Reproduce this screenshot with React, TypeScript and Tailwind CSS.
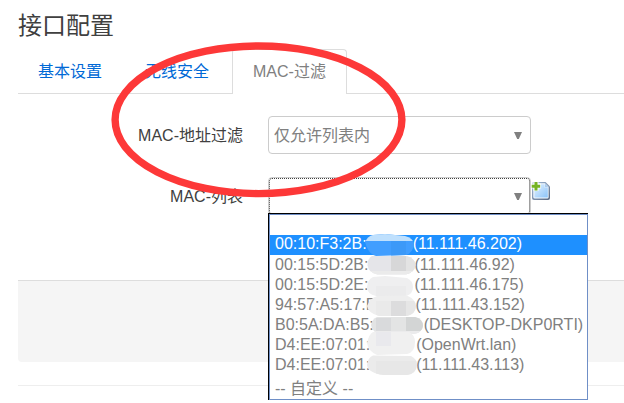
import React from 'react';

type Tab = {
  id: string;
  label: string;
  active?: boolean;
};

type Client = {
  mac: string;
  host: string;
  gap: string;
};

const tabs: Tab[] = [
  { id: 'general', label: '基本设置' },
  { id: 'security', label: '无线安全' },
  { id: 'macfilter', label: 'MAC-过滤', active: true },
];

const clients: Client[] = [
  { mac: '00:10:F3:2B:', host: '(11.111.46.202)', gap: 'w-[46px]' },
  { mac: '00:15:5D:2B:', host: '(11.111.46.92)', gap: 'w-[46px]' },
  { mac: '00:15:5D:2E:', host: '(11.111.46.175)', gap: 'w-[46px]' },
  { mac: '94:57:A5:17:F', host: '(11.111.43.152)', gap: 'w-[40px]' },
  { mac: 'B0:5A:DA:B5:', host: '(DESKTOP-DKP0RTI)', gap: 'w-[50px]' },
  { mac: 'D4:EE:07:01:', host: '(OpenWrt.lan)', gap: 'w-[46px]' },
  { mac: 'D4:EE:07:01:', host: '(11.111.43.113)', gap: 'w-[46px]' },
];

const AddIcon = () => (
  <svg width="20" height="20" viewBox="0 0 20 20" aria-hidden="true">
    <defs>
      <linearGradient id="page" x1="0" y1="0" x2="1" y2="1">
        <stop offset="0" stopColor="#e4f2ff" />
        <stop offset="1" stopColor="#8cc4fa" />
      </linearGradient>
      <linearGradient id="edge" x1="0" y1="0" x2="1" y2="1">
        <stop offset="0" stopColor="#a3bddc" />
        <stop offset="1" stopColor="#5b6982" />
      </linearGradient>
    </defs>
    <path d="M3 1h11.500l4.500 4.500V17a2 2 0 0 1-2 2H3a2 2 0 0 1-2-2V3a2 2 0 0 1 2-2z" fill="url(#edge)" />
    <path d="M3 2.200h11l3.600 3.600V16.400l-1 1H3.500l-1.200-1V3z" fill="#f4faff" />
    <path d="M4 3.200h9.600v3.200h3.200v10H3.400V4z" fill="url(#page)" />
    <path d="M14 2.600v3.600h3.600z" fill="#a9cbee" />
    <path d="M2.500 0h5v2.500H10v5H7.500V10h-5V7.500H0v-5h2.500z" fill="#fff" fillOpacity=".85" />
    <path d="M3.500 1h3v2.800h2.700v3H6.500v2.600h-3V6.800H.700v-3h2.800z" fill="#74b324" />
  </svg>
);

// blurred-out part of every address
const Smudges = () => (
  <svg
    className="pointer-events-none absolute left-0 top-0"
    width="320"
    height="187"
    viewBox="268 213 320 187"
    aria-hidden="true"
  >
    <defs>
      <clipPath id="s1"><path d="M364 241q3-6 8-7l12-1 20 2q8 2 9 8-1 9-8 11l-30 1q-8-2-11-14z" /></clipPath>
      <clipPath id="s2"><path d="M371 255h34q9 2 9.500 9-1 8-10 9.500h-28q-9-2-10-9 0-7 4.500-9.500z" /></clipPath>
      <clipPath id="s3"><path d="M372 276l12-1 22 2q6 3 6 9 0 7-7 9h-30q-9-2-9-9 1-8 6-10z" /></clipPath>
      <clipPath id="s4"><path d="M376 295l30-.5q9 4 9 11-1 8-9 9.500h-28q-11-3-12-10 3-8 10-10z" /></clipPath>
      <clipPath id="s5"><path d="M376 316h38q8 2 8 9-1 7-10 8h-33q-8-2-9-9 1-6 6-8z" /></clipPath>
      <clipPath id="s6"><path d="M372 331h36q6 3 6 10 0 10-8 12l-30 1q-9-4-10-12 2-9 6-11z" /></clipPath>
      <clipPath id="s7"><path d="M372 354.500l38 .5q6 3 6 9-1 9-10 10h-23q-16-2-17-10 1-8 6-9.500z" /></clipPath>
    </defs>
    <g clipPath="url(#s1)">
      <path d="M362 230h55v30h-55z" fill="#419eff" />
      <path d="M362 230h55v10h-55z" fill="#bfe0fd" />
      <path d="M390 240h15v15h-15z" fill="#3c99f8" />
    </g>
    <g clipPath="url(#s2)">
      <path d="M362 250h55v26h-55z" fill="#e5e5e9" />
      <path d="M390 255h15v15h-15z" fill="#d7d7d8" />
      <path d="M405 250h12v26h-12z" fill="#e3e3e3" />
      <path d="M362 270h55v6h-55z" fill="#ebebeb" />
    </g>
    <g clipPath="url(#s3)">
      <path d="M362 272h55v26h-55z" fill="#efeff0" />
      <path d="M375 285h30v13h-30z" fill="#ebebec" />
    </g>
    <g clipPath="url(#s4)">
      <path d="M362 290h55v28h-55z" fill="#eee" />
      <path d="M375 300h15v18h-15z" fill="#eaeaea" />
      <path d="M390 300h15v15h-15z" fill="#dcdcdd" />
      <path d="M405 300h12v15h-12z" fill="#e6e6e6" />
    </g>
    <g clipPath="url(#s5)">
      <path d="M366 312h58v24h-58z" fill="#e3e4e4" />
      <path d="M375 317h15v13h-15z" fill="#d9dadc" />
      <path d="M405 312h18v18h-18z" fill="#d3d5d5" />
      <path d="M366 330h58v6h-58z" fill="#ebebec" />
    </g>
    <g clipPath="url(#s6)">
      <path d="M362 330h55v26h-55z" fill="#f0f0f0" />
      <path d="M375 330h15v15h-15z" fill="#e9e9ed" />
    </g>
    <g clipPath="url(#s7)">
      <path d="M362 352h58v26h-58z" fill="#ebebeb" />
      <path d="M375 360h43v16h-43z" fill="#e7e7e7" />
    </g>
  </svg>
);

const Arrow = () => (
  <svg className="pointer-events-none absolute right-[9px] top-4" width="8" height="7" viewBox="0 0 8 7" aria-hidden="true">
    <path d="M0 0h8L4.800 7H3.200z" fill="#808080" />
  </svg>
);

const App = () => {
  return (
    <main
      className={
        "relative overflow-hidden bg-white pb-4 pl-[18px] pt-2 text-base text-[#404040] font-['Liberation_Sans','Noto_Sans_CJK_SC',sans-serif]"
      }
    >
      <h1 className="text-2xl leading-9">接口配置</h1>

      <nav className="mt-[5px] flex gap-[3px] border-b border-[#ddd]">
        {tabs.map((tab) => (
          <a
            key={tab.id}
            href={`#${tab.id}`}
            className={
              tab.active
                ? '-mb-px h-[45px] rounded-t border border-b-0 border-[#ddd] bg-white px-5 leading-[44px] text-[#808080]'
                : 'h-11 border border-transparent px-[19px] leading-[44px] text-[#0069d6]'
            }
          >
            {tab.label}
          </a>
        ))}
      </nav>

      <form className="mt-[22px] flex flex-col gap-[23px]">
        <div className="flex items-center gap-[25px]">
          <label htmlFor="policy" className="w-[225px] pt-px text-right">MAC-地址过滤</label>
          <div className="relative">
            <select
              id="policy"
              className="block h-[38px] w-[263px] appearance-none rounded border border-[#ccc] bg-white px-[5px] pt-px text-[#808080]"
            >
              <option>仅允许列表内</option>
            </select>
            <Arrow />
          </div>
        </div>

        <div className="flex items-center gap-[25px]">
          <label htmlFor="maclist" className="w-[225px] pt-px text-right">MAC-列表</label>
          <div className="relative flex items-start">
            <div className="relative">
              <select
                id="maclist"
                className="block h-[38px] w-[263px] appearance-none rounded border border-[#ccc] bg-white px-[5px] text-[#808080] outline-1 -outline-offset-2 outline-dotted outline-[#404040]"
              >
                <option></option>
              </select>
              <Arrow />
            </div>
            <button type="button" aria-label="添加" className="pt-1">
              <AddIcon />
            </button>

            {/* opened list */}
            <div className="absolute left-0 top-9 z-10 w-80 border-l border-t border-black">
              <ul role="listbox" className="border border-[#6f8fc7] bg-white leading-5 text-[#808080]">
                <li role="option" aria-selected="false" className="h-5"></li>
                {clients.map((client, index) => (
                  <li
                    key={index}
                    role="option"
                    aria-selected={index === 0}
                    className={
                      index === 0
                        ? 'flex h-5 whitespace-nowrap bg-[#1e90ff] pl-[5px] leading-[18px] text-white'
                        : 'flex h-5 whitespace-nowrap pl-[5px] leading-5'
                    }
                  >
                    <span>{client.mac}</span>
                    <span className={client.gap}></span>
                    <span>{client.host}</span>
                  </li>
                ))}
                <li role="option" aria-selected="false" className="h-6 px-[5px] leading-7">
                  -- 自定义 --
                </li>
              </ul>
              <Smudges />
            </div>
          </div>
        </div>
      </form>

      <div className="mt-[65px] h-[82px] rounded-bl border-t border-[#ddd] bg-[#f5f5f5]"></div>
      <hr className="mt-[23px] border-[#eee]" />

      {/* hand-drawn marker around the active tab */}
      <svg
        className="pointer-events-none absolute left-[108px] top-[38px] z-20"
        width="302"
        height="164"
        viewBox="108 38 302 164"
        aria-hidden="true"
      >
        <ellipse cx="258.500" cy="119.800" rx="143.400" ry="73.800" fill="none" stroke="#fd3838" strokeWidth="7.400" />
      </svg>
    </main>
  );
};

export default App;
